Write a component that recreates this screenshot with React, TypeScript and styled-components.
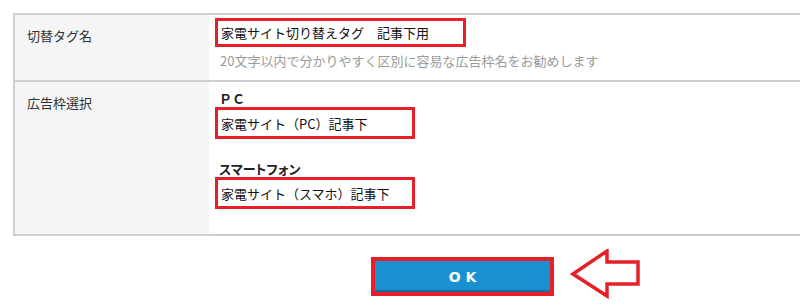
import React from 'react';
import styled, { createGlobalStyle } from 'styled-components';

const RED = '#e71f28';
const LINE = '#cfcfcf';
const LABEL_BG = '#f5f5f5';
const TEXT = '#333333';
const HINT = '#9a9a9a';
const BLUE = '#1b90d0';

const GlobalStyle = createGlobalStyle`
  html, body {
    margin: 0;
    padding: 0;
    background: #ffffff;
  }
  body {
    font-family: "Noto Sans CJK JP", "Noto Sans", sans-serif;
    font-size: 13px;
    color: ${TEXT};
  }
`;

interface Slot {
  heading: string;
  value: string;
  kana?: boolean;
}

const slots: Slot[] = [
  { heading: 'ＰＣ', value: '家電サイト（PC）記事下' },
  { heading: 'スマートフォン', value: '家電サイト（スマホ）記事下', kana: true },
];

const App = () => {
  return (
    <>
      <GlobalStyle />
      <Page>
        <Table>
          <Label>切替タグ名</Label>
          <Cell $first>
            <Field $width={251} $height={29}>家電サイト切り替えタグ　記事下用</Field>
            <Hint>20文字以内で分かりやすく区別に容易な広告枠名をお勧めします</Hint>
          </Cell>
          <Label $last>広告枠選択</Label>
          <Cell $last>
            {slots.map((slot, i) => (
              <Group key={slot.heading} $index={i}>
                <Heading $kana={slot.kana}>{slot.heading}</Heading>
                <Field $width={200} $height={32}>{slot.value}</Field>
              </Group>
            ))}
          </Cell>
        </Table>
        <Actions>
          <OkButton type="button">OK</OkButton>
          <Arrow width="72" height="50" viewBox="0 0 72 50">
            <path
              d="M3 25 L37 2 L37 13 L68 13 L68 35 L37 35 L37 47 Z"
              fill="none"
              stroke={RED}
              strokeWidth="3.5"
              strokeLinejoin="miter"
            />
          </Arrow>
        </Actions>
      </Page>
    </>
  );
};

export default App;

const Page = styled.div`
  width: 800px;
  height: 307px;
  overflow: hidden;
  padding: 13px 0 0 13px;
  box-sizing: border-box;
`;

const Table = styled.div`
  display: grid;
  grid-template-columns: 194px 1fr;
  border: 2px solid ${LINE};
  border-right: none;
  width: 800px;
`;

const Label = styled.div<{ $last?: boolean }>`
  background: ${LABEL_BG};
  padding: 12px 0 0 12px;
  line-height: 18px;
  border-bottom: ${(p) => (p.$last ? 'none' : `2px solid ${LINE}`)};
`;

const Cell = styled.div<{ $first?: boolean; $last?: boolean }>`
  display: flex;
  flex-direction: column;
  align-items: flex-start;
  padding: ${(p) => (p.$first ? '3px 0 10px 6px' : '9px 0 25px 6px')};
  border-bottom: ${(p) => (p.$last ? 'none' : `2px solid ${LINE}`)};
`;

const Field = styled.div<{ $width: number; $height: number }>`
  width: ${(p) => p.$width}px;
  height: ${(p) => p.$height}px;
  box-sizing: border-box;
  border: 3px solid ${RED};
  padding-left: 3px;
  display: flex;
  align-items: center;
  color: #111111;
  white-space: nowrap;
`;

const Hint = styled.div`
  color: ${HINT};
  line-height: 18px;
  margin: 5px 0 0 5px;
`;

const Group = styled.div<{ $index: number }>`
  display: flex;
  flex-direction: column;
  align-items: flex-start;
  margin-top: ${(p) => (p.$index === 0 ? 0 : 22)}px;
`;

const Heading = styled.div<{ $kana?: boolean }>`
  font-weight: bold;
  line-height: 16px;
  margin-left: 4px;
  color: #222222;
  font-feature-settings: ${(p) => (p.$kana ? "'palt'" : 'normal')};
`;

const Actions = styled.div`
  display: flex;
  align-items: flex-start;
  gap: 16px;
  margin-top: 21px;
  padding-left: 358px;
`;

const OkButton = styled.button`
  width: 183px;
  height: 39px;
  box-sizing: border-box;
  border: 4px solid ${RED};
  background: ${BLUE};
  box-shadow: inset 0 -2px 0 #156fa3;
  color: #ffffff;
  font-family: "DejaVu Sans", "Liberation Sans", sans-serif;
  font-weight: bold;
  font-size: 14px;
  letter-spacing: 5px;
  padding: 0 0 0 5px;
  cursor: pointer;
`;

const Arrow = styled.svg`
  display: block;
  margin-top: -8px;
`;
